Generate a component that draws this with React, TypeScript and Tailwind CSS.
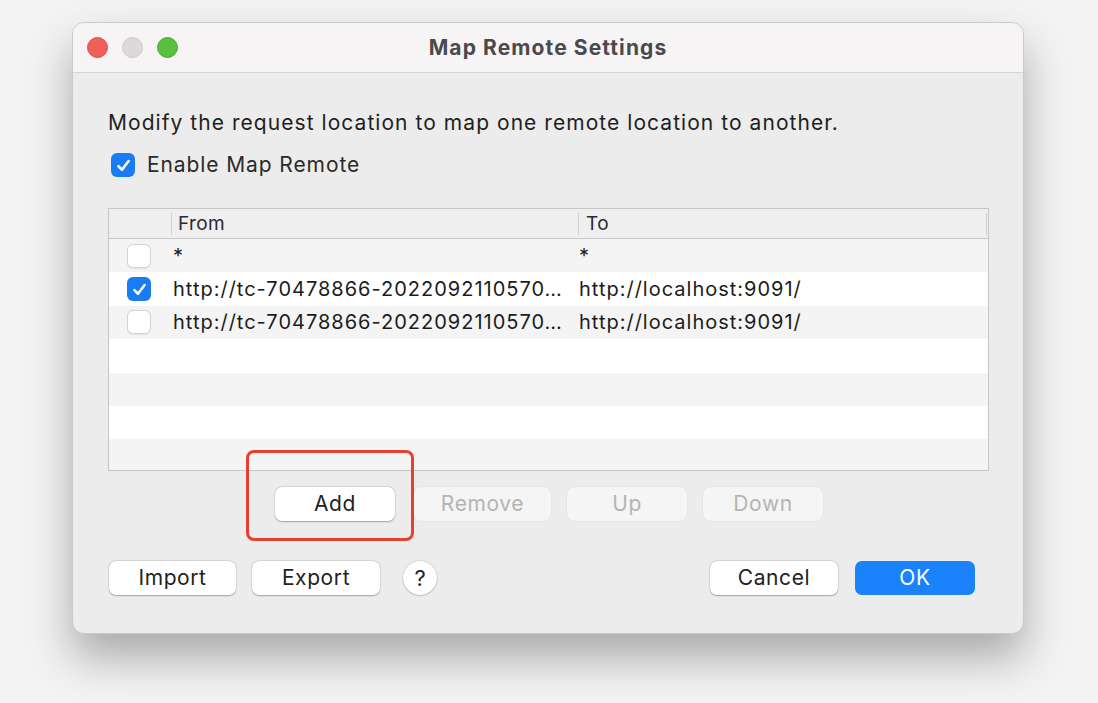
import React from "react";

const font = { fontFamily: 'Inter, "Liberation Sans", Arial, sans-serif' };

type Rule = { enabled: boolean; from: string; to: string };

const rules: Rule[] = [
  { enabled: false, from: "*", to: "*" },
  { enabled: true, from: "http://tc-70478866-2022092110570…", to: "http://localhost:9091/" },
  { enabled: false, from: "http://tc-70478866-2022092110570…", to: "http://localhost:9091/" },
];

function Check({ checked }: { checked: boolean }) {
  return checked ? (
    <span className="w-[24px] h-[24px] rounded-[6px] bg-[#1a7cf5] flex items-center justify-center shrink-0">
      <svg viewBox="0 0 16 16" className="w-[17px] h-[17px]">
        <path d="M3.2 8.6 L6.6 12 L12.8 3.8" fill="none" stroke="#fff" strokeWidth="2.4" strokeLinecap="round" strokeLinejoin="round" />
      </svg>
    </span>
  ) : (
    <span className="w-[24px] h-[24px] rounded-[6px] bg-white border border-[#d4d4d4] shadow-[0_0.5px_1px_rgba(0,0,0,0.08)] shrink-0" />
  );
}

function Btn({ label, w, disabled, primary, className = "" }: { label: string; w: string; disabled?: boolean; primary?: boolean; className?: string }) {
  const look = primary
    ? "bg-[#1a82fb] text-white"
    : disabled
    ? "bg-[#f5f5f5] text-[#b4b4b4] shadow-[0_0_0_0.5px_rgba(0,0,0,0.06)]"
    : "bg-white text-[#222] shadow-[0_0.5px_1.5px_rgba(0,0,0,0.28),0_0_0_0.5px_rgba(0,0,0,0.1)]";
  return (
    <div className={`${w} h-[34px] rounded-[7px] flex items-center justify-center text-[21px] tracking-[0.6px] ${look} ${className}`}>
      {label}
    </div>
  );
}

export default function App() {
  const emptyRows = 4;

  return (
    <div className="w-[1098px] h-[703px] bg-[#f3f3f3] pl-[72px] pt-[22px] overflow-hidden" style={font}>
      <div className="relative w-[952px] h-[612px] rounded-[12px] bg-[#ececec] border border-[#c9c9c9] shadow-[0_24px_44px_rgba(0,0,0,0.3)] overflow-hidden">
        {/* title bar */}
        <div className="h-[50px] bg-[#f7f4f6] border-b border-[#d6d6d6] grid grid-cols-[1fr_auto_1fr] items-center">
          <div className="flex items-center gap-[14px] pl-[14px]">
            <span className="w-[21px] h-[21px] rounded-full bg-[#ee5f57] border border-[#dc4f47]" />
            <span className="w-[21px] h-[21px] rounded-full bg-[#dcd8dc] border border-[#cdc8cc]" />
            <span className="w-[21px] h-[21px] rounded-full bg-[#57c03e] border border-[#48ab33]" />
          </div>
          <div className="text-[21px] font-bold text-[#4a4a4e] tracking-[1.1px]">Map Remote Settings</div>
          <div />
        </div>

        {/* body */}
        <div className="px-[35px] pt-[37px]">
          <p className="text-[21px] leading-[26px] text-[#1f1f1f] tracking-[1.05px]">
            Modify the request location to map one remote location to another.
          </p>
          <label className="mt-[16px] flex items-center gap-[12px] pl-[3px]">
            <Check checked />
            <span className="text-[21px] leading-[26px] text-[#2a2a2a] tracking-[0.9px]">Enable Map Remote</span>
          </label>

          {/* table */}
          <div className="mt-[30px] w-[881px] h-[263px] border border-[#c6c6c6] bg-white overflow-hidden">
            <div className="h-[30px] bg-[#efefef] border-b border-[#c8c8c8] grid grid-cols-[62px_407px_1fr] items-center text-[19px] text-[#2a2a2a] tracking-[0.4px]">
              <div />
              <div className="h-[22px] border-l border-[#d2d2d2] pl-[6px] leading-[22px]">From</div>
              <div className="h-[22px] border-l border-[#d2d2d2] pl-[7px] leading-[22px] border-r mr-[1px]">To</div>
            </div>
            {rules.map((r, i) => (
              <div
                key={i}
                className={`h-[33.4px] grid grid-cols-[62px_407px_1fr] items-center text-[20px] tracking-[1px] text-[#1c1c1c] ${
                  i % 2 === 0 ? "bg-[#f4f4f4]" : "bg-white"
                }`}
              >
                <div className="pl-[18px] flex items-center">
                  <Check checked={r.enabled} />
                </div>
                <div className="pl-[2px] whitespace-nowrap overflow-hidden">{r.from}</div>
                <div className="pl-[1px] whitespace-nowrap">{r.to}</div>
              </div>
            ))}
            {Array.from({ length: emptyRows }).map((_, i) => (
              <div key={i} className={`h-[33.4px] ${(i + rules.length) % 2 === 0 ? "bg-[#f4f4f4]" : "bg-white"}`} />
            ))}
          </div>

          {/* row actions */}
          <div className="mt-[16px] flex items-center pl-[167px]">
            <Btn label="Add" w="w-[120px]" />
            <Btn label="Remove" w="w-[137px]" disabled className="ml-[19px]" />
            <Btn label="Up" w="w-[120px]" disabled className="ml-[16px]" />
            <Btn label="Down" w="w-[120px]" disabled className="ml-[16px]" />
          </div>

          {/* footer */}
          <div className="mt-[40px] flex items-center">
            <div className="flex items-center gap-[16px] pl-[1px]">
              <Btn label="Import" w="w-[127px]" />
              <Btn label="Export" w="w-[128px]" />
              <div className="w-[34px] h-[34px] rounded-full bg-white shadow-[0_0.5px_1.5px_rgba(0,0,0,0.28),0_0_0_0.5px_rgba(0,0,0,0.1)] flex items-center justify-center text-[22px] text-[#222] ml-[7px]">
                ?
              </div>
            </div>
            <div className="ml-auto flex items-center gap-[17px] mr-[13px]">
              <Btn label="Cancel" w="w-[128px]" />
              <Btn label="OK" w="w-[120px]" primary />
            </div>
          </div>
        </div>

        {/* highlight annotation */}
        <div className="absolute left-[173px] top-[427px] w-[168px] h-[91px] rounded-[8px] border-[3px] border-[#e8402f]" />
      </div>
    </div>
  );
}
